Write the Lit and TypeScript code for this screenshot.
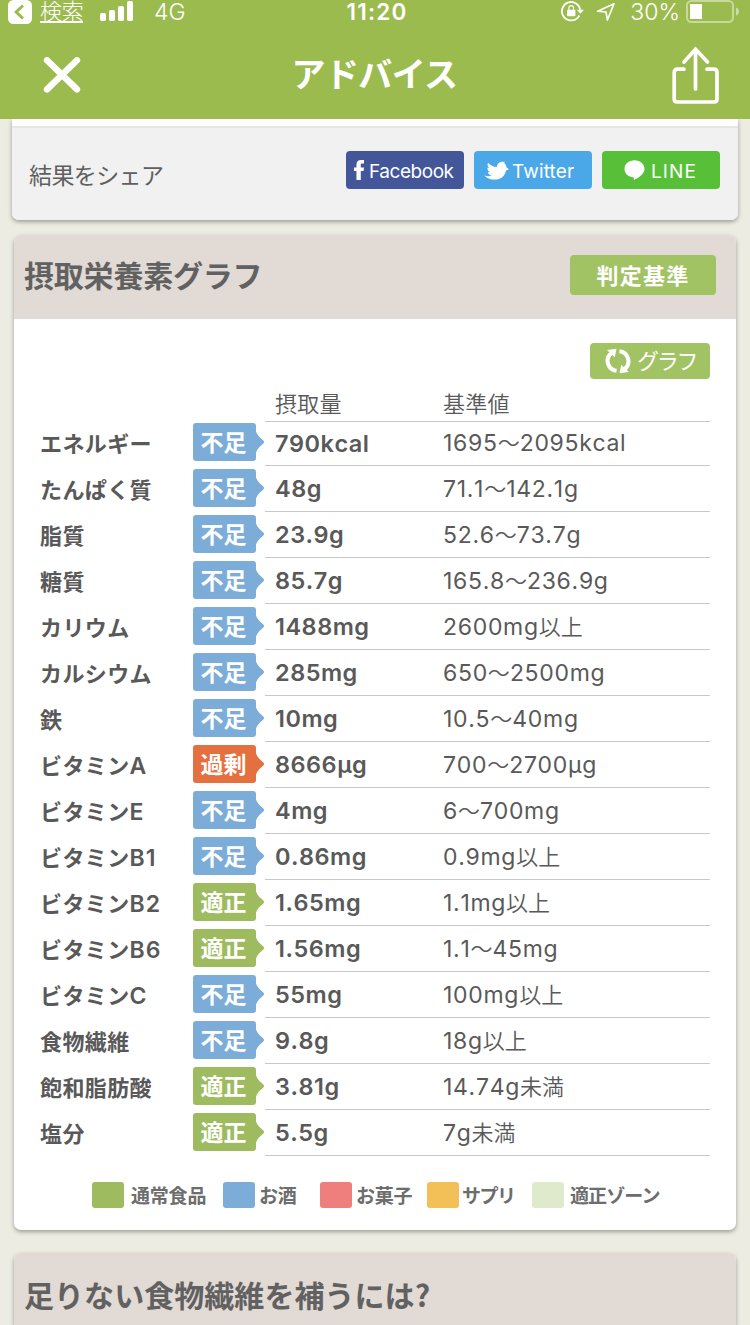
import { LitElement, html, css } from "lit";
import { customElement } from "lit/decorators.js";
import { classMap } from "lit/directives/class-map.js";

type Level = "low" | "over" | "ok";
interface Row { name: string; level: Level; amount: string; base: string; }

const LABELS: Record<Level, string> = { low: "不足", over: "過剰", ok: "適正" };

const ROWS: Row[] = [
  { name: "エネルギー", level: "low", amount: "790kcal", base: "1695〜2095kcal" },
  { name: "たんぱく質", level: "low", amount: "48g", base: "71.1〜142.1g" },
  { name: "脂質", level: "low", amount: "23.9g", base: "52.6〜73.7g" },
  { name: "糖質", level: "low", amount: "85.7g", base: "165.8〜236.9g" },
  { name: "カリウム", level: "low", amount: "1488mg", base: "2600mg以上" },
  { name: "カルシウム", level: "low", amount: "285mg", base: "650〜2500mg" },
  { name: "鉄", level: "low", amount: "10mg", base: "10.5〜40mg" },
  { name: "ビタミンA", level: "over", amount: "8666μg", base: "700〜2700μg" },
  { name: "ビタミンE", level: "low", amount: "4mg", base: "6〜700mg" },
  { name: "ビタミンB1", level: "low", amount: "0.86mg", base: "0.9mg以上" },
  { name: "ビタミンB2", level: "ok", amount: "1.65mg", base: "1.1mg以上" },
  { name: "ビタミンB6", level: "ok", amount: "1.56mg", base: "1.1〜45mg" },
  { name: "ビタミンC", level: "low", amount: "55mg", base: "100mg以上" },
  { name: "食物繊維", level: "low", amount: "9.8g", base: "18g以上" },
  { name: "飽和脂肪酸", level: "ok", amount: "3.81g", base: "14.74g未満" },
  { name: "塩分", level: "ok", amount: "5.5g", base: "7g未満" },
];

const LEGEND = [
  { cls: "food", text: "通常食品" },
  { cls: "alcohol", text: "お酒" },
  { cls: "sweets", text: "お菓子" },
  { cls: "supple", text: "サプリ" },
  { cls: "zone", text: "適正ゾーン" },
];

/** Wraps the Latin runs of a mixed string so that they get their own tracking. */
const mixed = (text: string) =>
  text.split(/([\x21-\x7eμ]+)/).filter(Boolean).map((part) =>
    /^[\x21-\x7eμ]/.test(part) ? html`<span class="latin">${part}</span>` : part);

@customElement("status-bar")
class StatusBar extends LitElement {
  static styles = css`
    :host { display: grid; grid-template-columns: 1fr auto 1fr; height: 24px; color: #fff;
      font: 400 23px/24px Inter, "Noto Sans CJK JP", sans-serif; }
    svg { display: block; flex: none; }
    .left, .right { display: flex; align-items: flex-start; }
    .left { padding-left: 8px; }
    .back { font-family: Inter, "Noto Sans CJK JP", sans-serif; font-weight: 300; font-size: 22px; line-height: 22px;
      height: 21px; border-bottom: 2px solid #fff; margin: 0 17px 0 8px; width: 43px; white-space: nowrap; letter-spacing: -0.3px; }
    .net { margin-left: 20px; font-weight: 300; letter-spacing: 0; }
    .time { font-weight: 600; font-size: 22.5px; letter-spacing: 1.2px; padding-left: 4px; }
    .right { justify-content: flex-end; padding-right: 11px; }
    .arrow { margin: 0 14px 0 12px; }
    .pct { font-weight: 300; letter-spacing: 0; margin-right: 6px; }
  `;
  render() {
    return html`
      <div class="left">
        <svg width="24" height="24" viewBox="0 0 24 24">
          <rect width="24" height="24" rx="5.5" fill="#fff"/>
          <path d="M15 5.5 8.2 12 15 18.5" fill="none" stroke="#9bbb4f" stroke-width="3"/>
        </svg>
        <span class="back">検索</span>
        <svg width="34" height="24" viewBox="0 0 34 24" fill="#fff">
          <rect x="0" y="13" width="6" height="8" rx="1.8"/><rect x="9" y="10" width="6" height="11" rx="1.8"/>
          <rect x="18" y="6" width="6" height="15" rx="1.8"/><rect x="27" y="1" width="6" height="20" rx="1.8"/>
        </svg>
        <span class="net">4G</span>
      </div>
      <span class="time">11:20</span>
      <div class="right">
        <svg width="23" height="24" viewBox="0 0 23 24">
          <path d="M15.2 18.900A9.200 9.200 0 1 1 19.200 9.800" fill="none" stroke="#fff" stroke-width="1.8"/>
          <path d="M15.800 9.800h7.200l-3.600 4z" fill="#fff"/>
          <path d="M18.400 15.500a9.200 9.200 0 0 1-3.200 3.400" fill="none" stroke="#fff" stroke-width="1.800"/>
          <rect x="6" y="9.800" width="8.400" height="6.400" rx="1" fill="#fff"/>
          <path d="M7.900 10.500V7.900a2.300 2.300 0 0 1 4.600 0v2.600" fill="none" stroke="#fff" stroke-width="1.200"/>
        </svg>
        <svg class="arrow" width="20" height="24" viewBox="0 0 20 24">
          <path d="M1.600 11.200 18 3.800 11.400 20 10 12z" fill="none" stroke="#fff" stroke-width="1.700" stroke-linejoin="round"/>
        </svg>
        <span class="pct">30%</span>
        <svg width="53" height="24" viewBox="0 0 53 24">
          <rect x="1" y="1" width="46" height="21" rx="4.5" fill="none" stroke="#fff" stroke-opacity=".45" stroke-width="2"/>
          <rect x="4" y="4" width="12" height="15" fill="#fff"/>
          <path d="M50 7.5q3 1 3 4t-3 4z" fill="#fff" fill-opacity=".5"/>
        </svg>
      </div>`;
  }
}

@customElement("nutrient-row")
class NutrientRow extends LitElement {
  static properties = { row: { attribute: false } };
  declare row: Row;
  static styles = css`
    :host { display: grid; grid-template-columns: 153px 72px 445px; grid-template-rows: 100%; height: 46px; color: #595959;
      font: 400 23px/46px Inter, "Noto Sans CJK JP", sans-serif; white-space: nowrap; }
    :host(.first) { height: 44px; line-height: 43px; }
    .name { font-weight: 700; font-size: 22px; letter-spacing: 0.4px; padding-top: 1px; }
    .name .latin { font-weight: 600; font-size: 23px; letter-spacing: 1px; }
    .badge { display: flex; align-self: end; height: 38px; margin-bottom: 5px; line-height: 37px; }
    .chip { width: 61px; padding-right: 2px; border-radius: 3px; text-align: center; color: #fff;
      font-family: "Noto Sans CJK JP", sans-serif; font-weight: 700; font-size: 23px; }
    .tip { display: block; width: 9px; height: 38px; }
    .low .chip { background: #7cadd9; } .low .tip { fill: #7cadd9; }
    .over .chip { background: #e5703f; } .over .tip { fill: #e5703f; }
    .ok .chip { background: #9ebc5f; } .ok .tip { fill: #9ebc5f; }
    .values { display: grid; grid-template-columns: 168px 1fr; grid-template-rows: 100%; padding-left: 10px; border-bottom: 1px solid #c8c8c8; }
    .amount { font-weight: 600; font-size: 23.5px; letter-spacing: 0.5px; font-kerning: none; }
    .base { font-size: 22px; font-weight: 350; }
    .base .latin { font-size: 23px; font-weight: 400; letter-spacing: 0.7px; font-kerning: none; }
  `;
  render() {
    const r = this.row;
    return html`
      <div class="name">${mixed(r.name)}</div>
      <div class=${classMap({ badge: true, [r.level]: true })}>
        <span class="chip">${LABELS[r.level]}</span>
        <svg class="tip" viewBox="0 0 9 38"><path d="M0 8.5Q.8 11 3.2 13.8L7.6 17.8Q8.6 19 7.6 20.2L3.2 24.2Q.8 27 0 29.5z"/></svg>
      </div>
      <div class="values"><span class="amount">${r.amount}</span><span class="base">${mixed(r.base)}</span></div>`;
  }
}

@customElement("app-root")
class AppRoot extends LitElement {
  static styles = css`
    :host { display: flex; flex-direction: column; height: 1325px; background: #ecece3; color: #5f5f5f;
      font-family: Inter, "Noto Sans CJK JP", sans-serif; }
    svg { display: block; flex: none; }
    header { flex: none; height: 119px; background: #9bbb4f; color: #fff; position: relative; }
    .nav { display: grid; grid-template-columns: 1fr auto 1fr; align-items: start; padding: 22px 31px 0 43px; }
    .title { font: 700 34px/50px "Noto Sans CJK JP", sans-serif; letter-spacing: -0.6px; margin: 0; padding-right: 13px; padding-top: 2px; }
    .close { margin-top: 11px; }
    .share { justify-self: end; }
    .card { flex: none; border-radius: 7px; box-shadow: 0 2px 4px rgba(0, 0, 0, 0.33); margin: 0 14px; background: #fff; }
    .result { margin: 0 12px; padding-top: 7px; border-radius: 0 0 7px 7px; }
    .result-foot { height: 92px; display: flex; align-items: flex-start; gap: 10px; padding: 0 18px 0 17px;
      border-top: 2px solid #e6e6e6; background: #f1f1f1; border-radius: 0 0 7px 7px; }
    .result-label { flex: 1; font: 400 23px/34px "Noto Sans CJK JP", sans-serif; color: #5f5f5f; margin-top: 29px; letter-spacing: -0.6px; }
    .sns { display: flex; align-items: center; width: 118px; height: 38px; margin-top: 23px; border-radius: 4px; color: #fff;
      font-size: 19px; line-height: 38px; box-sizing: border-box; }
    .sns-text { padding-top: 3px; }
    .facebook { background: #43569a; padding-left: 8px; gap: 5px; letter-spacing: -0.45px; }
    .twitter { background: #4ba8e8; padding-left: 10px; gap: 3px; letter-spacing: 0.15px; }
    .line { background: #58c038; padding-left: 22px; gap: 6px; letter-spacing: 1.1px; }
    .graph { margin-top: 15px; height: 995px; }
    .head { height: 84px; display: flex; align-items: flex-start; justify-content: space-between; padding: 0 20px 0 10px; box-sizing: border-box;
      background: #e2dad4; border-radius: 7px 7px 0 0; }
    .head h2 { font: 700 30px/44px "Noto Sans CJK JP", sans-serif; margin: 17px 0 0; color: #616161; letter-spacing: -0.2px; }
    .criteria { width: 146px; height: 40px; margin-top: 20px; border-radius: 4px; background: #a2c363; color: #fff; text-align: center;
      font: 700 22px/38px "Noto Sans CJK JP", sans-serif; letter-spacing: 1.2px; }
    .body { padding: 24px 26px 0; }
    .toggle { display: flex; align-items: center; width: 120px; height: 36px; margin-left: auto; box-sizing: border-box; padding-left: 15px; gap: 6px;
      border-radius: 4px; background: #a2c363; color: #fff; font: 400 22px/34px Inter, "Noto Sans CJK JP", sans-serif; letter-spacing: -2.2px; }
    .columns { display: grid; grid-template-columns: 168px 1fr; margin-left: 225px; padding-left: 10px; height: 42px;
      border-bottom: 1px solid #c8c8c8; font: 350 22px/46px "Noto Sans CJK JP", sans-serif; color: #595959; letter-spacing: 0.3px; }
    .legend { display: flex; padding: 26px 0 0 52px; font: 700 19px/26px "Noto Sans CJK JP", sans-serif; color: #6d6d6d; letter-spacing: -0.2px; white-space: nowrap; }
    .item { display: flex; }
    .swatch { width: 32px; height: 26px; border-radius: 3px; }
    .item.food { width: 131px; gap: 7px; } .food .swatch { background: #9ebc5f; }
    .item.alcohol { width: 97px; gap: 4px; } .alcohol .swatch { background: #7cadd9; }
    .item.sweets { width: 107px; gap: 4px; } .sweets .swatch { background: #ef7f7d; }
    .item.supple { width: 105px; gap: 3px; letter-spacing: -1.5px; } .supple .swatch { background: #f3bf57; }
    .item.zone { gap: 6px; letter-spacing: -0.9px; } .zone .swatch { background: #dfe9cb; }
    .advice { margin-top: 23px; height: 72px; border-radius: 7px 7px 0 0; }
    .advice .head { height: 72px; }
    .advice h2 { margin-top: 19px; letter-spacing: 0.05px; }
  `;
  render() {
    return html`
      <header>
        <status-bar></status-bar>
        <div class="nav">
          <svg class="close" width="38" height="36" viewBox="0 0 38 36"><path d="M4 3.2 34 32.4M34 3.2 4 32.4" stroke="#fff" stroke-width="6.4" stroke-linecap="round"/></svg>
          <h1 class="title">アドバイス</h1>
          <svg class="share" width="48" height="60" viewBox="0 0 48 60" fill="none" stroke="#fff" stroke-width="3.7" stroke-linecap="round">
            <path d="M13 23.200H6.500Q3.200 23.200 3.200 26.500V53Q3.200 56 6.200 56H43Q46 56 46 53V26.500Q46 23.200 42.700 23.200H36"/>
            <path d="M24.500 43V4M13 16 24.500 3.200 36.500 16"/>
          </svg>
        </div>
      </header>
      <section class="card result">
        <div class="result-foot">
          <span class="result-label">結果をシェア</span>
          <span class="sns facebook">
            <svg width="10" height="20" viewBox="0 0 9 20" preserveAspectRatio="none"><path d="M2.200 20V11H0V7.400h2.200V5C2.200 1.700 3.500 0 6.400 0H9v3.600H7.400C6.300 3.600 6.100 4.100 6.100 5v2.400H9L8.600 11H6.100v9z" fill="#fff"/></svg>
            <span class="sns-text">Facebook</span>
          </span>
          <span class="sns twitter">
            <svg width="25" height="19" viewBox="0 0 25 19"><path d="M25 8.300 22 9.500C21 14.600 17.500 18.500 11 18.600 6.500 18.700 2.800 17.300.3 14.200c2.600 1.300 4.800 1.300 7.200.3C5.500 14 4.300 13 3.900 11.300l1.900-.2C4 10 3.300 8.600 3.400 6.700l1.500.4C3.600 5.400 3.200 3.600 4 1.700 6.500 4.300 9.300 5.800 12.700 6.100 12.900 3.200 14.600 1.400 17 .9L18.800.2l-.2 1 2.200-.6-.7 1.300C21.500 2.900 22.300 4.400 22.500 6.500z" fill="#fff"/></svg>
            <span class="sns-text">Twitter</span>
          </span>
          <span class="sns line">
            <svg width="21" height="20" viewBox="0 0 21 20"><path d="M10.500.3C4.800.3.500 4 .5 8.900c0 4.200 3.200 7.400 8.300 8.300 1.200.2 1.300.8.900 2.800C15.200 17.500 20.500 13.500 20.500 8.900 20.500 4 16.200.3 10.500.3z" fill="#fff"/></svg>
            <span class="sns-text">LINE</span>
          </span>
        </div>
      </section>
      <section class="card graph">
        <div class="head"><h2>摂取栄養素グラフ</h2><span class="criteria">判定基準</span></div>
        <div class="body">
          <div class="toggle">
            <svg width="26" height="26" viewBox="0 0 26 26">
              <g fill="none" stroke="#fff" stroke-width="4"><path d="M11.600 22.800A10 10 0 0 1 6.400 5"/><path d="M14.400 3.200A10 10 0 0 1 19.600 21"/></g>
              <path d="M2 2 11.500.8 9.800 9.200zM24 24 14.500 25.200 16.200 16.800z" fill="#fff"/>
            </svg>
            グラフ
          </div>
          <div class="columns"><span>摂取量</span><span>基準値</span></div>
          ${ROWS.map((row, i) => html`<nutrient-row class=${i === 0 ? "first" : ""} .row=${row}></nutrient-row>`)}
          <div class="legend">
            ${LEGEND.map((l) => html`<div class="item ${l.cls}"><span class="swatch"></span><span>${l.text}</span></div>`)}
          </div>
        </div>
      </section>
      <section class="card advice"><div class="head"><h2>足りない食物繊維を補うには?</h2></div></section>`;
  }
}
